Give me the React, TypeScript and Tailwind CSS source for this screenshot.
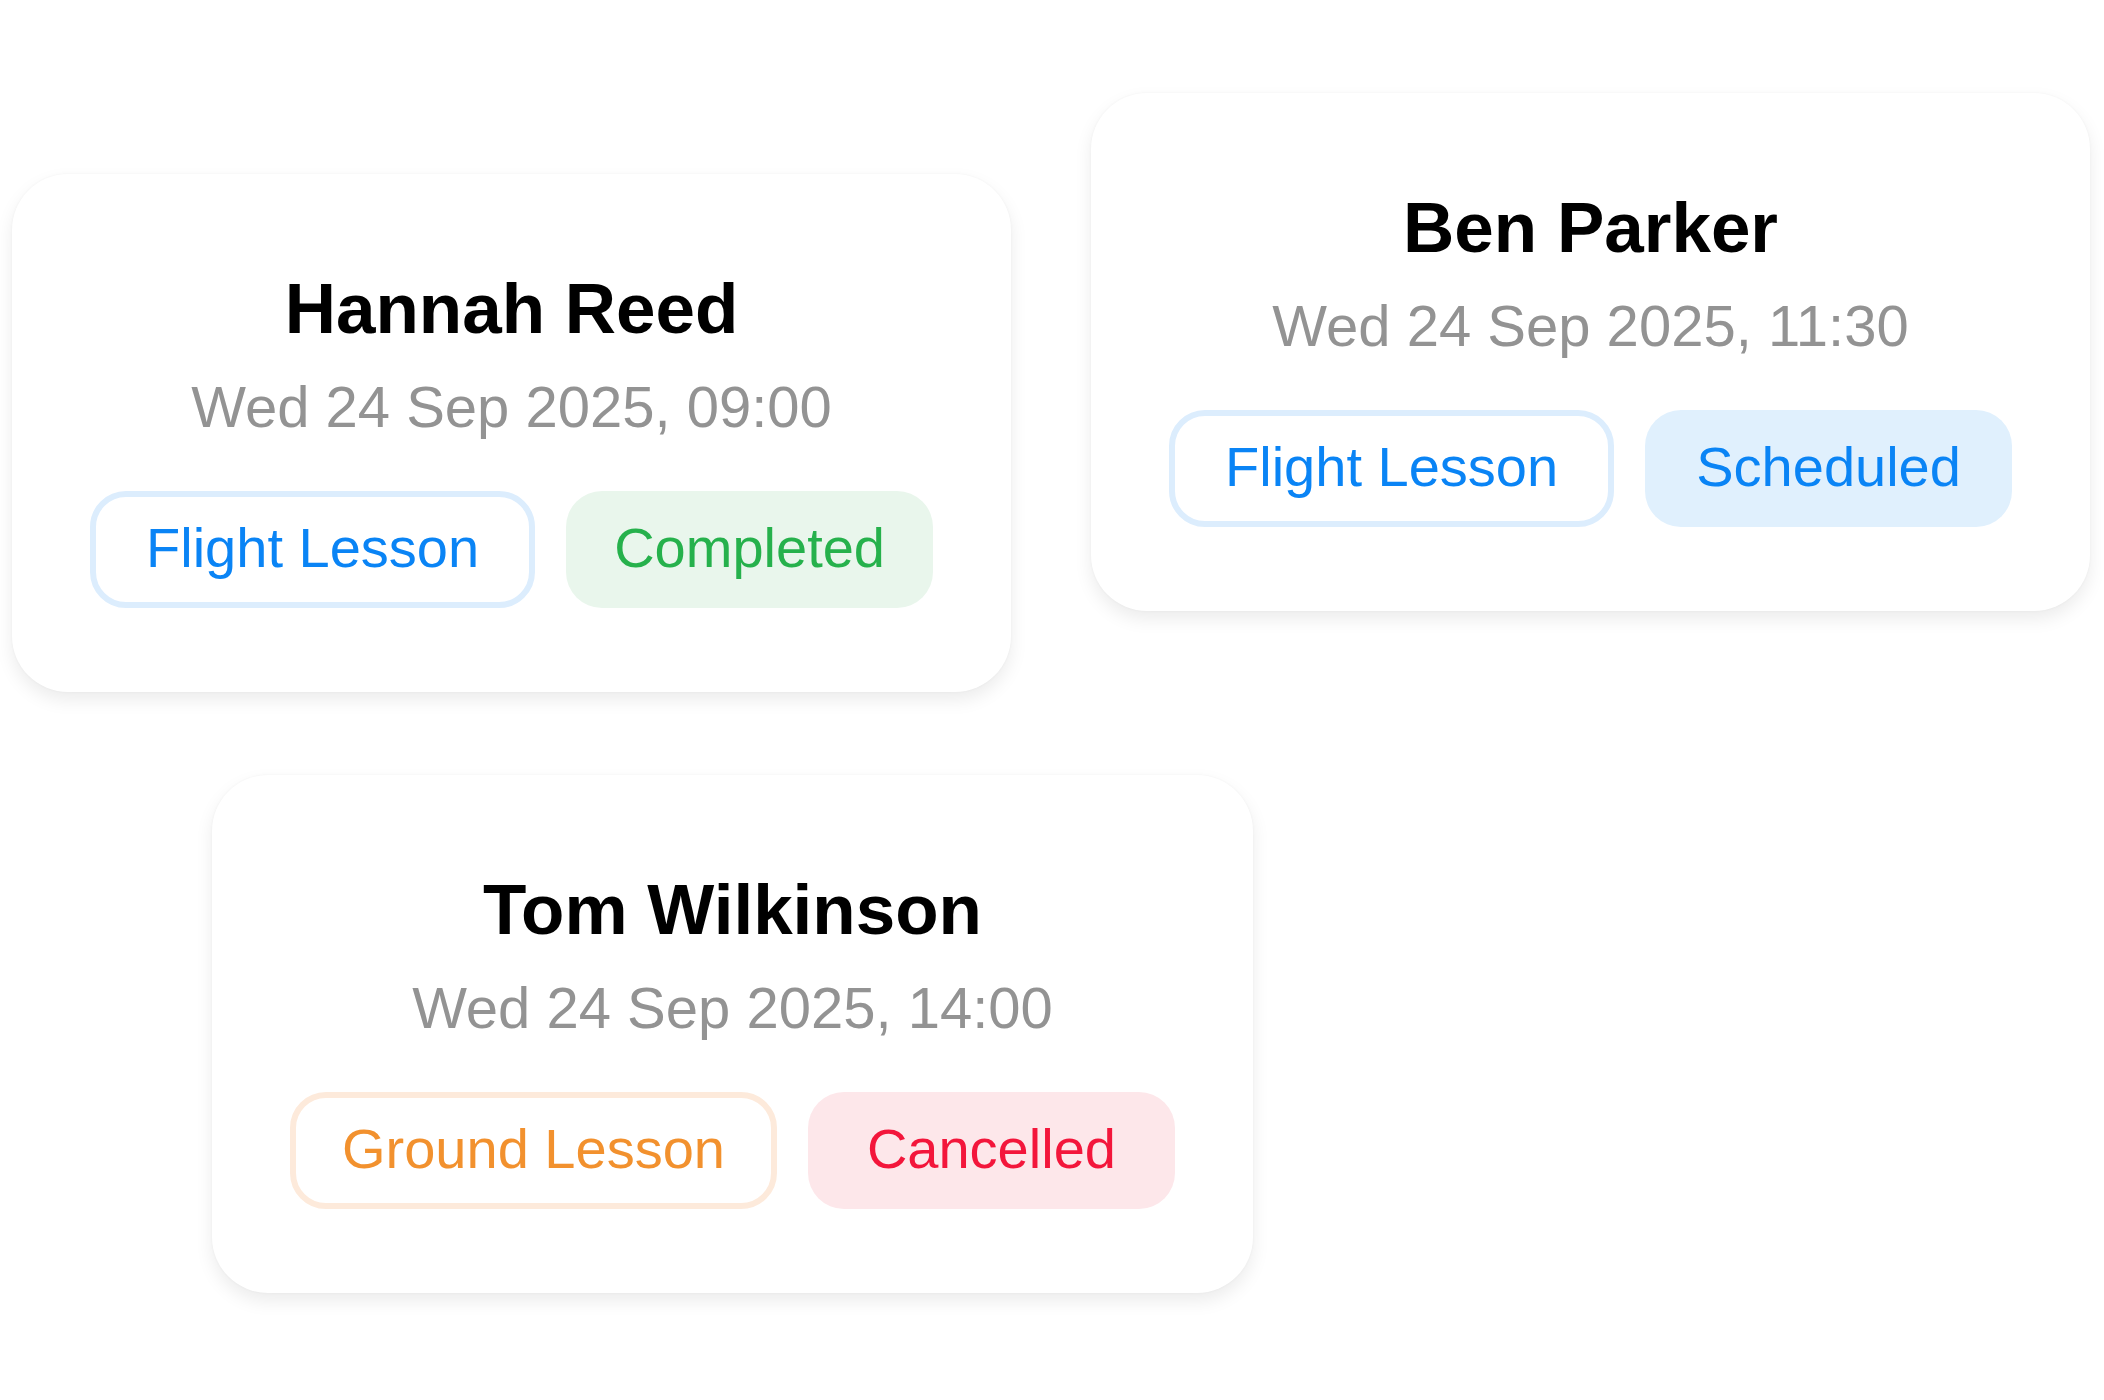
import React from "react";

type Pill = { label: string; cls: string };
type CardData = {
  name: string;
  date: string;
  type: Pill;
  status: Pill;
  pos: string;
};

const cards: CardData[] = [
  {
    name: "Hannah Reed",
    date: "Wed 24 Sep 2025, 09:00",
    type: { label: "Flight Lesson", cls: "border-[#dcedfd] text-[#0a84f5] px-[50px]" },
    status: { label: "Completed", cls: "bg-[#e9f6ec] text-[#26b14c]" },
    pos: "left-[12px] top-[174px]",
  },
  {
    name: "Ben Parker",
    date: "Wed 24 Sep 2025, 11:30",
    type: { label: "Flight Lesson", cls: "border-[#dcedfd] text-[#0a84f5] px-[50px]" },
    status: { label: "Scheduled", cls: "bg-[#e0f0fd] text-[#0a84f5]" },
    pos: "left-[1091px] top-[93px]",
  },
  {
    name: "Tom Wilkinson",
    date: "Wed 24 Sep 2025, 14:00",
    type: { label: "Ground Lesson", cls: "border-[#fdeadb] text-[#f2912e] px-[46px]" },
    status: { label: "Cancelled", cls: "bg-[#fde7ea] text-[#f3163b]" },
    pos: "left-[212px] top-[775px]",
  },
];

function Card({ c }: { c: CardData }) {
  return (
    <div
      className={`absolute ${c.pos} w-max rounded-[56px] bg-white px-[78px] pt-[99px] pb-[84px] shadow-[0_8px_18px_rgba(0,0,0,0.08),0_0_3px_rgba(0,0,0,0.04)] flex flex-col items-center`}
    >
      <div className="text-[71px] leading-none font-bold text-black">
        {c.name}
      </div>
      <div className="mt-[34px] text-[58px] leading-none text-[#939393]">
        {c.date}
      </div>
      <div className="mt-[55px] flex gap-[31px]">
        <div
          className={`h-[117px] flex items-center rounded-[36px] border-[6px] bg-white pb-[4px] text-[56px] leading-none ${c.type.cls}`}
        >
          {c.type.label}
        </div>
        <div
          className={`h-[117px] w-[367px] flex items-center justify-center rounded-[36px] pb-[4px] text-[56px] leading-none ${c.status.cls}`}
        >
          {c.status.label}
        </div>
      </div>
    </div>
  );
}

export default function App() {
  return (
    <div
      className="relative w-[2104px] h-[1400px] bg-white overflow-hidden"
      style={{ fontFamily: '"Liberation Sans", Arial, sans-serif' }}
    >
      {cards.map((c) => (
        <Card key={c.name} c={c} />
      ))}
    </div>
  );
}
